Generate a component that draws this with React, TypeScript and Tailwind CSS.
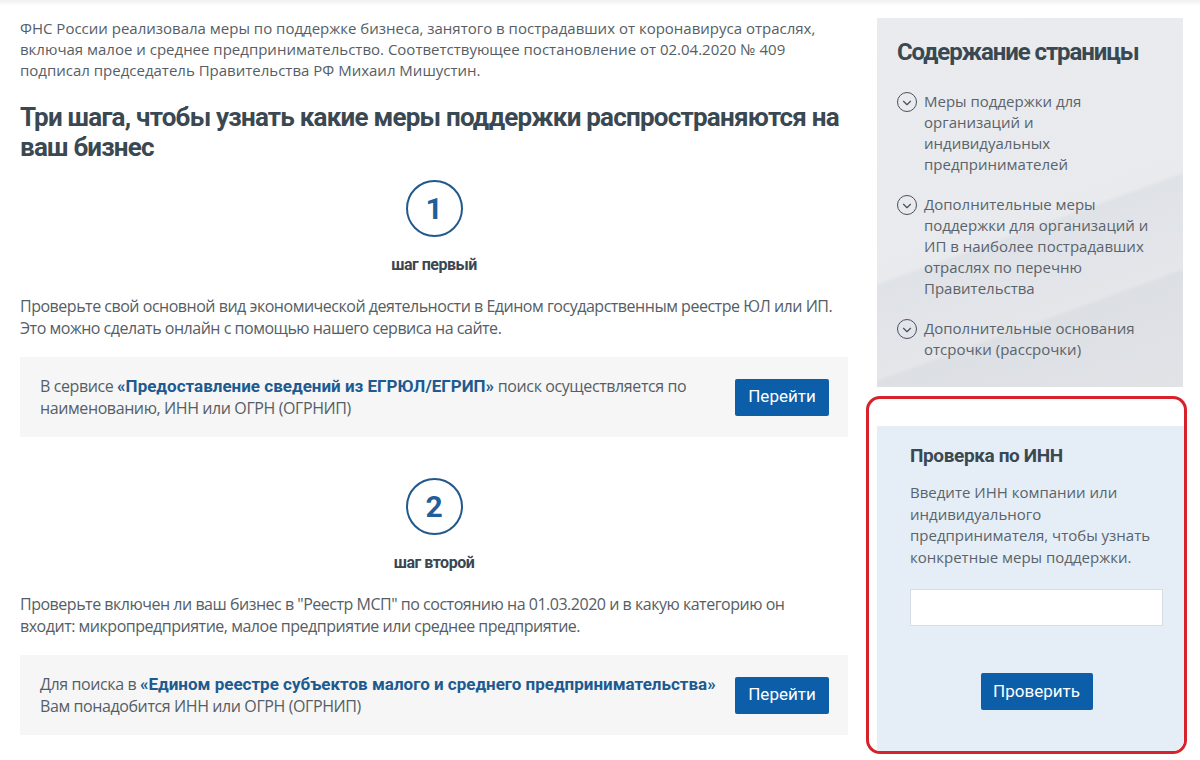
import { ChevronDown } from 'lucide-react';

const body = "font-['Open_Sans',sans-serif]";
const narrow = "font-['Roboto',sans-serif]";

const toc = [
  'Меры поддержки для организаций и индивидуальных предпринимателей',
  'Дополнительные меры поддержки для организаций и ИП в наиболее пострадавших отраслях по перечню Правительства',
  'Дополнительные основания отсрочки (рассрочки)',
];

function StepCircle({ n }: { n: number }) {
  return (
    <div className="flex justify-center">
      <div
        className={`flex size-[57px] items-center justify-center rounded-full border-2 border-[#22598c] text-[30px] font-bold text-[#1f5f9c] ${narrow}`}
      >
        {n}
      </div>
    </div>
  );
}

function Step({
  n,
  label,
  text,
  lines,
}: {
  n: number;
  label: string;
  text: string[];
  lines: React.ReactNode[];
}) {
  return (
    <section>
      <StepCircle n={n} />
      <div
        className={`mt-[18px] text-center text-[16px] font-bold leading-5 tracking-[-0.03em] text-[#3b4650] ${narrow}`}
      >
        {label}
      </div>
      <p className={`mt-5 text-[16px] leading-[22px] tracking-[-0.03em] text-[#555e66] ${body}`}>
        {text[0]}
        <br />
        {text[1]}
      </p>
      <div className="mt-[18px] flex h-[80px] items-center gap-2 bg-[#f6f6f6] pl-5 pr-[19px]">
        <div className={`flex-1 text-[16px] leading-[22px] tracking-[-0.025em] text-[#555e66] ${body}`}>
          {lines.map((l, i) => (
            <div key={i} className="h-[22px] whitespace-nowrap">
              {l}
            </div>
          ))}
        </div>
        <button className={`h-[37px] w-[94px] shrink-0 rounded-[2px] bg-[#0c5ea8] text-[17px] text-white ${narrow}`}>
          Перейти
        </button>
      </div>
    </section>
  );
}

const linkCls = `text-[17px] font-bold leading-[22px] tracking-normal text-[#1d5a90] ${narrow}`;

export default function App() {
  return (
    <div className={`min-h-[760px] bg-white ${body}`}>
      <div className="h-[6px] bg-gradient-to-b from-[#f0f0f0] to-white" />
      <div className="flex gap-[29px] pl-5 pt-3">
        <main className="w-[828px]">
          <p className="text-[15px] leading-[21px] text-[#555e66]">
            ФНС России реализовала меры по поддержке бизнеса, занятого в пострадавших от коронавируса отраслях,
            включая малое и среднее предпринимательство. Соответствующее постановление от 02.04.2020 № 409
            подписал председатель Правительства РФ Михаил Мишустин.
          </p>
          <h1
            className={`mt-[21px] text-[26px] font-bold leading-[30px] tracking-[-0.03em] text-[#3a4852] ${narrow}`}
          >
            Три шага, чтобы узнать какие меры поддержки распространяются на ваш бизнес
          </h1>
          <div className="mt-[18px]">
            <Step
              n={1}
              label="шаг первый"
              text={[
                'Проверьте свой основной вид экономической деятельности в Едином государственным реестре ЮЛ или ИП.',
                'Это можно сделать онлайн с помощью нашего сервиса на сайте.',
              ]}
              lines={[
                <>
                  В сервисе <a className={linkCls}>«Предоставление сведений из ЕГРЮЛ/ЕГРИП»</a> поиск осуществляется
                  по
                </>,
                'наименованию, ИНН или ОГРН (ОГРНИП)',
              ]}
            />
          </div>
          <div className="mt-[41px]">
            <Step
              n={2}
              label="шаг второй"
              text={[
                'Проверьте включен ли ваш бизнес в "Реестр МСП" по состоянию на 01.03.2020 и в какую категорию он',
                'входит: микропредприятие, малое предприятие или среднее предприятие.',
              ]}
              lines={[
                <>
                  Для поиска в <a className={linkCls}>«Едином реестре субъектов малого и среднего предпринимательства»</a>
                </>,
                'Вам понадобится ИНН или ОГРН (ОГРНИП)',
              ]}
            />
          </div>
        </main>

        <aside className="w-[310px]">
          <div className="w-[306px] bg-[linear-gradient(160deg,#e9ebee_0%,#e8eaed_55%,#dfe2e7_56%,#e4e6ea_75%,#dcdfe4_76%,#e1e3e7_100%)] pb-[27px] pl-5 pr-6 pt-[18px]">
            <h2
              className={`whitespace-nowrap text-[24px] font-bold leading-[32px] tracking-[-0.045em] text-[#3a4852] ${narrow}`}
            >
              Содержание страницы
            </h2>
            <ul className="mt-[23px] flex flex-col gap-[19px]">
              {toc.map((t) => (
                <li key={t} className="flex gap-[7px] text-[15px] leading-[21px] text-[#5a636b]">
                  <span className="mt-[1px] flex size-[20px] shrink-0 items-center justify-center rounded-full border-[1.5px] border-[#46525c]">
                    <ChevronDown className="mt-[1px] size-[14px] text-[#46525c]" strokeWidth={2} />
                  </span>
                  <span>{t}</span>
                </li>
              ))}
            </ul>
          </div>

          <div className="-ml-[11px] mt-[9px] h-[358px] w-[321px] overflow-hidden rounded-[14px] border-[3px] border-[#d7212b] pl-[8px] pt-[27px]">
            <div className="flex h-full flex-col bg-[#e5eef6] pl-[33px] pr-[21px] pt-[18px]">
              <h3 className={`text-[19px] font-bold leading-6 tracking-[-0.02em] text-[#3a4852] ${narrow}`}>
                Проверка по ИНН
              </h3>
              <p className="mt-[14px] text-[15px] leading-[21.5px] text-[#5a636b]">
                Введите ИНН компании или индивидуального предпринимателя, чтобы узнать конкретные меры поддержки.
              </p>
              <input className="mt-[21px] h-[37px] w-full border border-[#d8dde3] bg-white outline-none" />
              <div className="mt-[47px] flex justify-center">
                <button className={`h-[37px] w-[112px] rounded-[2px] bg-[#0c5ea8] text-[17px] text-white ${narrow}`}>
                  Проверить
                </button>
              </div>
            </div>
          </div>
        </aside>
      </div>
    </div>
  );
}
